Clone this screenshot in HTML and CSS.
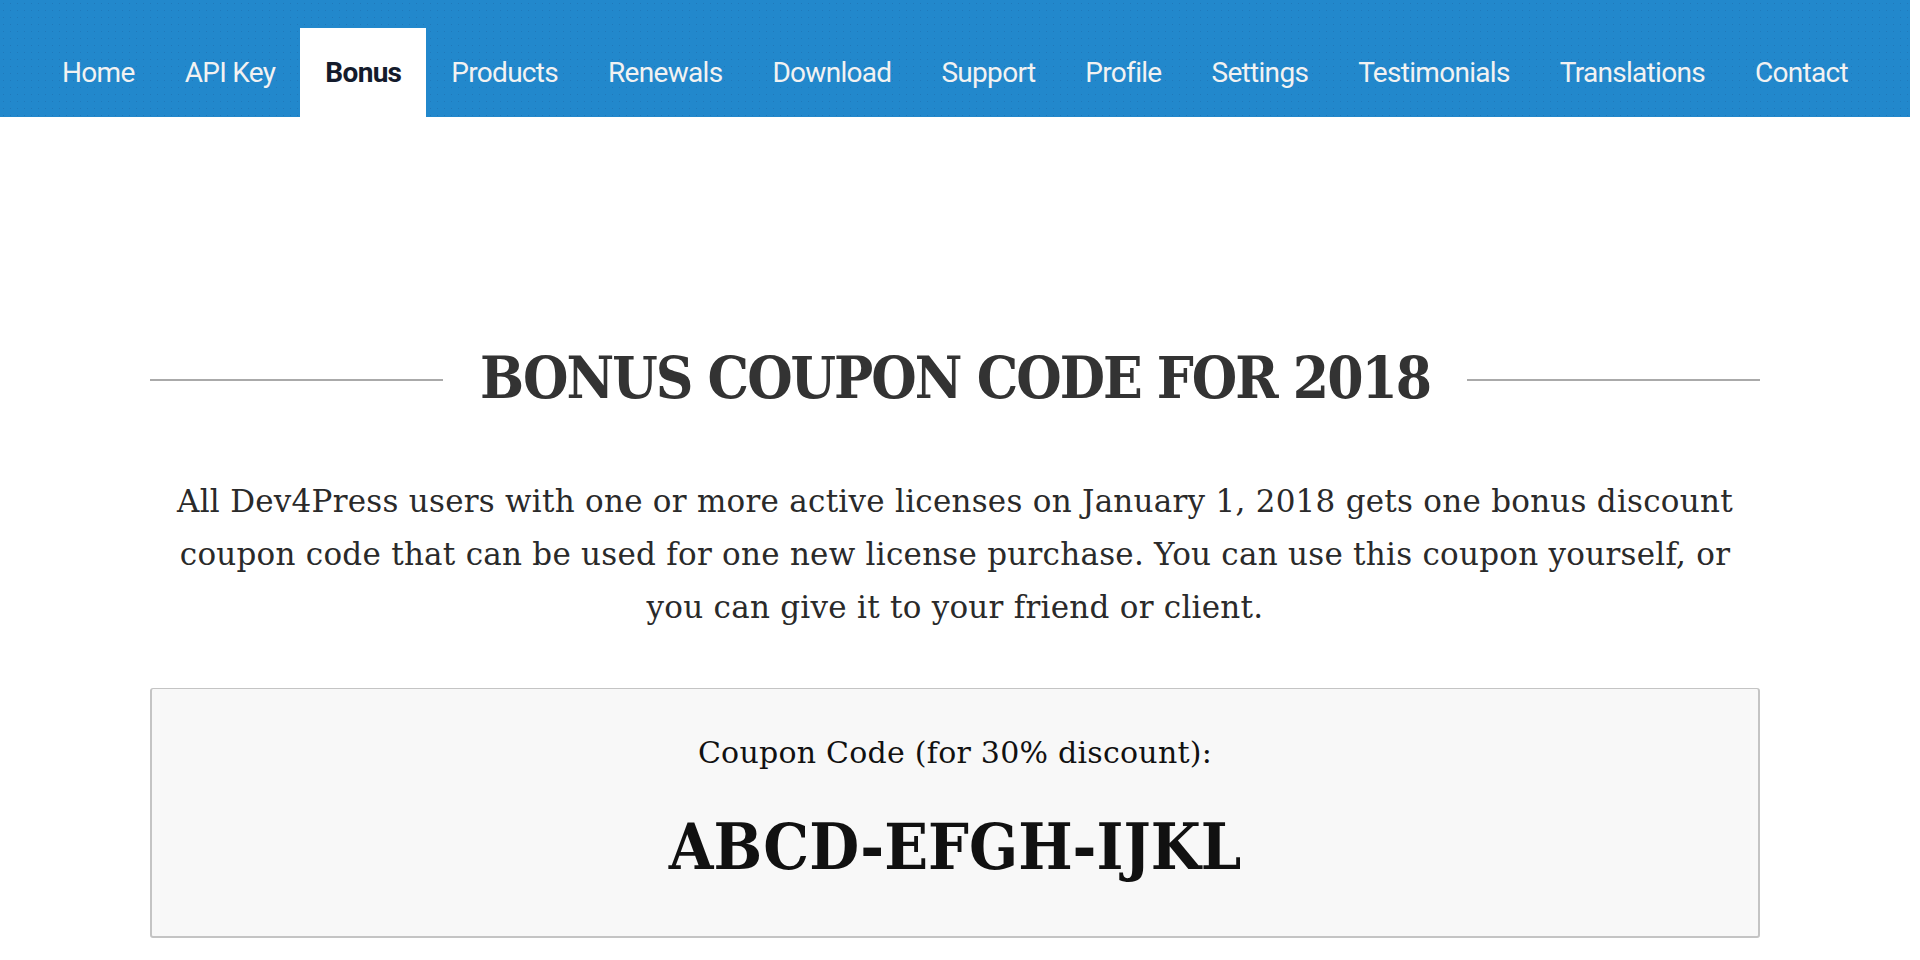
FILE: index.html
```html
<!DOCTYPE html>
<html lang="en">
<head>
<meta charset="utf-8">
<title>Bonus Coupon Code</title>
<link rel="stylesheet" href="styles.css">
</head>
<body>
<div class="page">
  <nav class="topnav">
    <ul class="menu">
      <li class="menu-item"><a href="#">Home</a></li>
      <li class="menu-item"><a href="#">API Key</a></li>
      <li class="menu-item active"><a href="#">Bonus</a></li>
      <li class="menu-item"><a href="#">Products</a></li>
      <li class="menu-item"><a href="#">Renewals</a></li>
      <li class="menu-item"><a href="#">Download</a></li>
      <li class="menu-item"><a href="#">Support</a></li>
      <li class="menu-item"><a href="#">Profile</a></li>
      <li class="menu-item"><a href="#">Settings</a></li>
      <li class="menu-item"><a href="#">Testimonials</a></li>
      <li class="menu-item"><a href="#">Translations</a></li>
      <li class="menu-item"><a href="#">Contact</a></li>
    </ul>
  </nav>
  <main class="content">
    <div class="title-row">
      <span class="rule"></span>
      <h1 class="title">BONUS COUPON CODE FOR 2018</h1>
      <span class="rule"></span>
    </div>
    <p class="intro">All Dev4Press users with one or more active licenses on January 1, 2018 gets one bonus discount<br>coupon code that can be used for one new license purchase. You can use this coupon yourself, or<br>you can give it to your friend or client.</p>
    <div class="coupon-box">
      <p class="coupon-label">Coupon Code (for 30% discount):</p>
      <p class="coupon-code">ABCD-EFGH-IJKL</p>
    </div>
  </main>
</div>
</body>
</html>
```

FILE: styles.css
```css
html, body {
  margin: 0;
  padding: 0;
  background: #ffffff;
}

.page {
  width: 1910px;
}

.topnav {
  height: 117px;
  background-color: #2288cc;
  background-image: radial-gradient(rgba(20, 70, 130, 0.22) 0.6px, transparent 1px);
  background-size: 7px 7px;
}

.menu {
  list-style: none;
  margin: 0;
  padding: 28px 0 0 0;
  display: flex;
  justify-content: center;
}

.menu-item a {
  display: block;
  height: 89px;
  line-height: 89px;
  padding: 0 25px;
  font-family: Roboto, "Liberation Sans", sans-serif;
  font-size: 28px;
  letter-spacing: -0.7px;
  color: #f2f2f2;
  text-decoration: none;
}

.menu-item.active a {
  background: #ffffff;
  color: #141b2c;
  font-weight: 700;
}

.content {
  width: 1610px;
  margin: 0 auto;
  padding-top: 224px;
}

.title-row {
  display: flex;
  align-items: center;
  gap: 37px;
}

.rule {
  flex: 1;
  height: 2px;
  background: #aaaaaa;
  margin-top: 4px;
}

.title {
  margin: 0;
  font-family: "DejaVu Serif Condensed", "DejaVu Serif", serif;
  font-weight: 700;
  font-size: 58px;
  letter-spacing: -2px;
  line-height: 74px;
  color: #333333;
  white-space: nowrap;
}

.intro {
  margin: 60px 0 0 0;
  text-align: center;
  font-family: "DejaVu Serif", serif;
  font-size: 31px;
  letter-spacing: 0.25px;
  line-height: 53px;
  color: #2a2a2a;
  white-space: nowrap;
}

.coupon-box {
  margin-top: 54px;
  border: 2px solid #c4c4c4;
  border-top-width: 1px;
  border-radius: 3px;
  background: #f8f8f8;
  padding: 40px 20px 50px;
  text-align: center;
}

.coupon-label {
  margin: 0;
  font-family: "DejaVu Serif", serif;
  font-size: 30px;
  letter-spacing: 0.25px;
  line-height: 48px;
  color: #111111;
}

.coupon-code {
  margin: 30px 0 0 0;
  font-family: "DejaVu Serif Condensed", "DejaVu Serif", serif;
  font-weight: 700;
  font-size: 64px;
  line-height: 79px;
  color: #111111;
}
```
